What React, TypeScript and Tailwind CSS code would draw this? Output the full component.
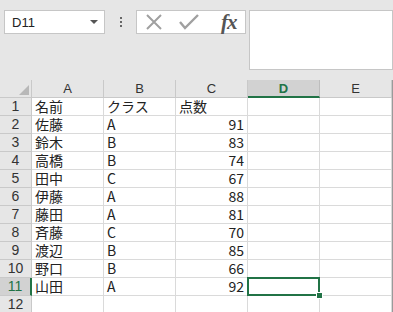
import React from "react";

const rows: [string, string, string][] = [
  ["名前", "クラス", "点数"],
  ["佐藤", "A", "91"],
  ["鈴木", "B", "83"],
  ["高橋", "B", "74"],
  ["田中", "C", "67"],
  ["伊藤", "A", "88"],
  ["藤田", "A", "81"],
  ["斉藤", "C", "70"],
  ["渡辺", "B", "85"],
  ["野口", "B", "66"],
  ["山田", "A", "92"],
  ["", "", ""],
];

const cols = ["A", "B", "C", "D", "E"];

export default function App() {
  return (
    <div
      className="w-[393px] h-[312px] overflow-hidden bg-[#e6e6e6] text-[#222]"
      style={{ fontFamily: '"Noto Sans CJK JP", "Liberation Sans", sans-serif' }}
    >
      {/* formula bar */}
      <div className="flex items-start h-[80px] pt-[10px] pl-[4px]">
        <div className="w-[101px] h-[24px] bg-white border border-[#c6c6c6] flex items-center justify-between pl-[7px] pr-[6px]">
          <span className="text-[13px] leading-none" style={{ fontFamily: '"Liberation Sans", sans-serif' }}>D11</span>
          <svg width="8" height="5" viewBox="0 0 8 5"><path d="M0 0h8L4 4z" fill="#555" /></svg>
        </div>
        <div className="w-[31px] h-[24px] flex flex-col items-center justify-center gap-[2px]">
          <span className="w-[2px] h-[2px] bg-[#666]" />
          <span className="w-[2px] h-[2px] bg-[#666]" />
          <span className="w-[2px] h-[2px] bg-[#666]" />
        </div>
        <div className="w-[110px] h-[24px] bg-white border border-[#c6c6c6] flex items-center">
          <svg className="ml-[8px]" width="18" height="16" viewBox="0 0 18 16">
            <path d="M2 1l14 14M16 1L2 15" stroke="#a0a0a0" strokeWidth="2" />
          </svg>
          <svg className="ml-[16px]" width="20" height="16" viewBox="0 0 20 16">
            <path d="M1 8l5 6L19 1" stroke="#a0a0a0" strokeWidth="2.4" fill="none" />
          </svg>
          <span
            className="ml-[22px] text-[21px] italic font-bold leading-none text-[#555] tracking-[-1px]"
            style={{ fontFamily: '"Liberation Serif", serif' }}
          >
            fx
          </span>
        </div>
        <div className="ml-[3px] flex-1 h-[60px] bg-white border border-[#c6c6c6]" />
      </div>

      {/* grid */}
      <div className="grid grid-cols-[32px_72px_72px_72px_72px_72px_1px] grid-rows-[18px] auto-rows-[18px] bg-white text-[14px] leading-[17px]">
        <div className="bg-[#e6e6e6] border-r border-b border-[#c9c9c9] flex items-end justify-end p-[2px]">
          <svg width="10" height="10" viewBox="0 0 10 10"><path d="M10 0v10H0z" fill="#b8b8b8" /></svg>
        </div>
        {cols.map((c) => (
          <div
            key={c}
            className={
              c === "D"
                ? "bg-[#d2d2d2] border-r border-[#bdbdbd] border-b-2 border-b-[#217346] text-[#217346] font-bold flex items-center justify-center text-[13px]"
                : "bg-[#e6e6e6] border-r border-b border-[#c9c9c9] text-[#333] flex items-center justify-center text-[13px]"
            }
            style={{ fontFamily: '"Liberation Sans", sans-serif' }}
          >
            {c}
          </div>
        ))}
        <div className="bg-[#9a9a9a]" />
        {rows.map((r, i) => {
          const n = i + 1;
          const sel = n === 11;
          const num = /^\d+$/.test(r[2]);
          return (
            <React.Fragment key={n}>
              <div
                className={
                  sel
                    ? "bg-[#d2d2d2] border-b border-[#c9c9c9] border-r-2 border-r-[#217346] text-[#217346] flex items-center justify-center text-[14px] overflow-hidden"
                    : "bg-[#e6e6e6] border-r border-b border-[#c9c9c9] text-[#333] flex items-center justify-center text-[14px] overflow-hidden"
                }
                style={{ fontFamily: '"Liberation Sans", sans-serif' }}
              >
                {n}
              </div>
              <div className="border-r border-b border-[#dadada] pl-[3px] overflow-hidden whitespace-nowrap">{r[0]}</div>
              <div className="border-r border-b border-[#dadada] pl-[3px] overflow-hidden whitespace-nowrap">{r[1]}</div>
              <div
                className={
                  num
                    ? "border-r border-b border-[#dadada] pr-[3px] text-right overflow-hidden whitespace-nowrap"
                    : "border-r border-b border-[#dadada] pl-[3px] overflow-hidden whitespace-nowrap"
                }
              >
                {r[2]}
              </div>
              <div className={sel ? "relative z-10 border-r border-b border-[#dadada]" : "border-r border-b border-[#dadada]"}>
                {sel && (
                  <>
                    <div className="absolute left-[-1px] top-[-1px] w-[73px] h-[19px] border-2 border-[#217346]" />
                    <div className="absolute right-[-4px] bottom-[-4px] w-[7px] h-[7px] bg-[#217346] border border-white" />
                  </>
                )}
              </div>
              <div className="border-r border-b border-[#dadada]" />
              <div className="bg-[#9a9a9a]" />
            </React.Fragment>
          );
        })}
      </div>
    </div>
  );
}
